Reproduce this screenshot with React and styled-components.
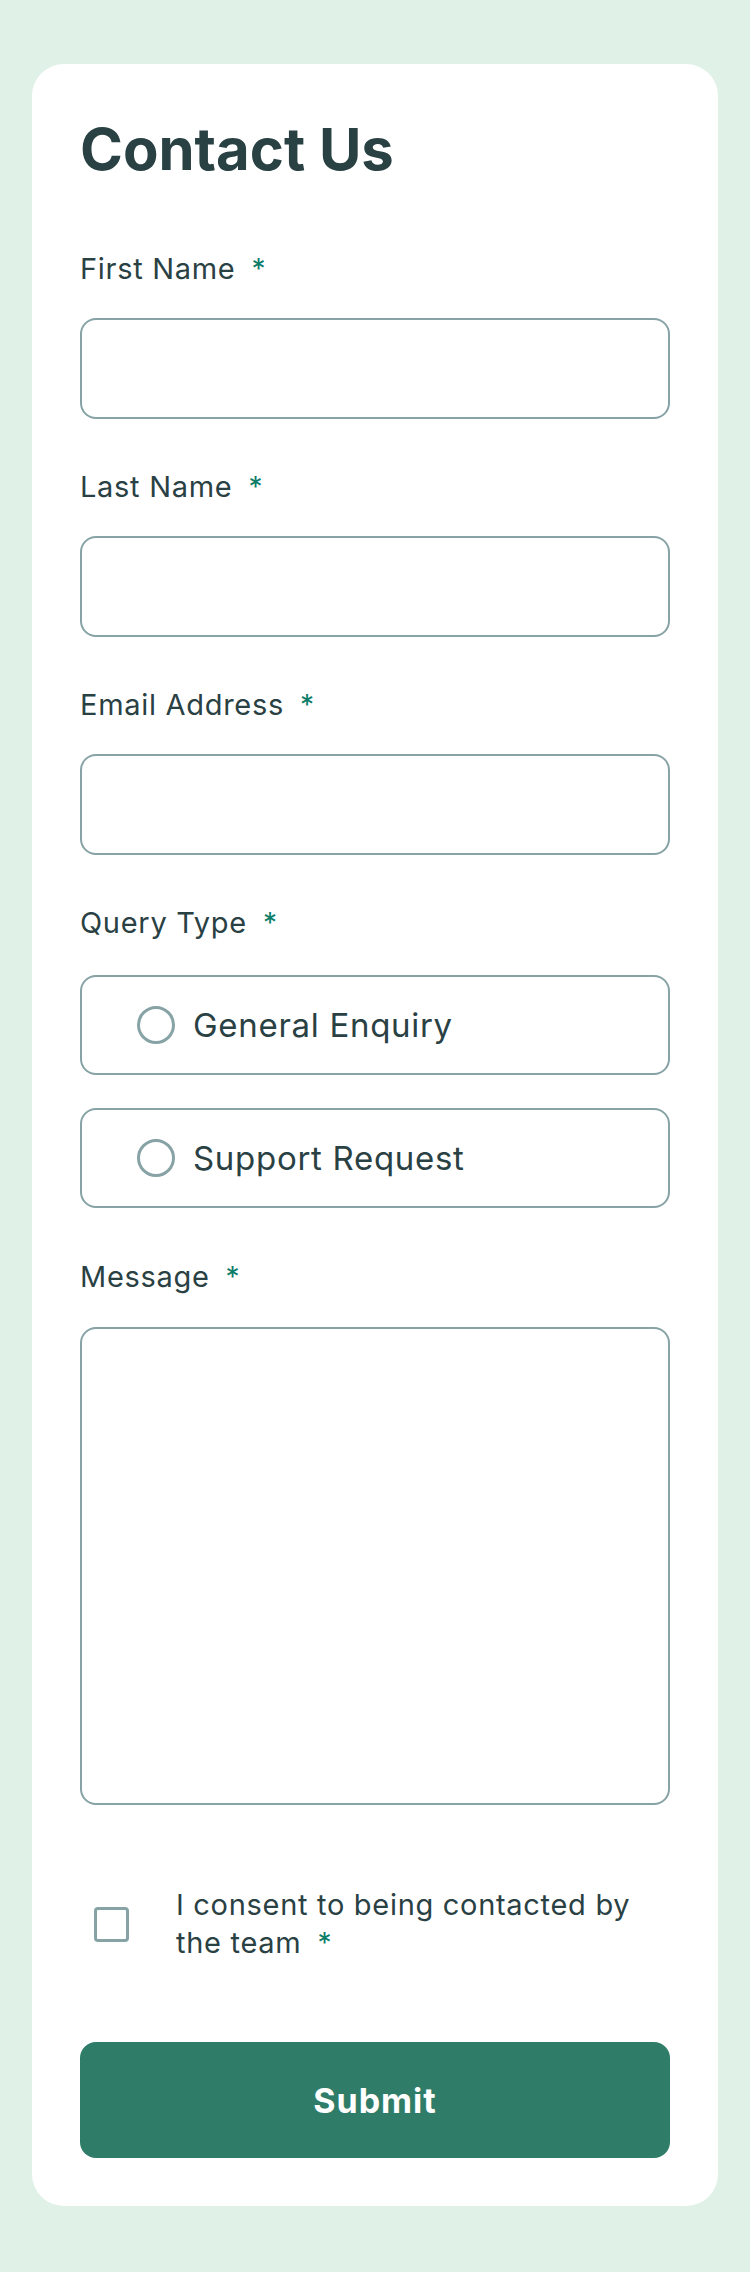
import React from "react";
import styled, { createGlobalStyle } from "styled-components";

const Global = createGlobalStyle`
  * { box-sizing: border-box; }
  html, body { margin: 0; padding: 0; }
  body {
    background: #e0f1e8;
    font-family: Inter, "Noto Sans", "Liberation Sans", sans-serif;
    color: #2a4144;
  }
`;

const Page = styled.main`
  padding: 64px 32px 64px;
`;

const Card = styled.form`
  background: #ffffff;
  border-radius: 32px;
  padding: 56px 48px 48px;
  display: flex;
  flex-direction: column;
`;

const Title = styled.h1`
  margin: 0 0 73px;
  font-size: 58px;
  line-height: 58px;
  font-weight: 700;
  color: #2a4144;
`;

const Field = styled.div`
  display: flex;
  flex-direction: column;
  margin-bottom: ${(p) => p.$mb || 50}px;
`;

const Label = styled.label`
  display: flex;
  align-items: baseline;
  gap: 16px;
  font-size: 29px;
  line-height: 36px;
  letter-spacing: 0.7px;
  color: #2a4144;
  margin-bottom: ${(p) => p.$mb || 31}px;
`;

const Star = styled.span`
  color: #0c7d69;
  font-size: 28px;
`;

const TextInput = styled.input`
  display: block;
  width: 100%;
  height: 101px;
  border: 2px solid #87a3a6;
  border-radius: 16px;
  background: #fff;
  font: inherit;
  padding: 0 32px;
  outline: none;
`;

const TextArea = styled.textarea`
  display: block;
  width: 100%;
  height: 478px;
  border: 2px solid #87a3a6;
  border-radius: 16px;
  background: #fff;
  resize: none;
  font: inherit;
  padding: 24px 32px;
  outline: none;
`;

const RadioGroup = styled.div`
  display: flex;
  flex-direction: column;
  gap: 33px;
`;

const RadioOption = styled.label`
  display: flex;
  align-items: center;
  gap: 18px;
  height: 100px;
  padding-left: 55px;
  border: 2px solid #87a3a6;
  border-radius: 16px;
  font-size: 33px;
  letter-spacing: 0.7px;
  color: #2a4144;
`;

const RadioCircle = styled.input`
  appearance: none;
  margin: 0;
  width: 38px;
  height: 38px;
  border: 3px solid #87a3a6;
  border-radius: 50%;
  background: #fff;
  flex: none;
`;

const ConsentRow = styled.label`
  display: flex;
  align-items: center;
  gap: 47px;
  padding-left: 14px;
  margin: 31px 0 80px;
`;

const CheckBox = styled.input`
  appearance: none;
  margin: 0;
  width: 35px;
  height: 35px;
  border: 3px solid #87a3a6;
  border-radius: 4px;
  background: #fff;
  flex: none;
`;

const ConsentText = styled.span`
  font-size: 29px;
  line-height: 38px;
  letter-spacing: 0.7px;
  color: #2a4144;
`;

const InlineStar = styled.span`
  color: #0c7d69;
  margin-left: 16px;
  font-size: 28px;
`;

const SubmitButton = styled.button`
  display: block;
  width: 100%;
  height: 116px;
  border: none;
  border-radius: 16px;
  background: #2f7d69;
  color: #ffffff;
  font-family: inherit;
  font-size: 34px;
  font-weight: 700;
  letter-spacing: 1px;
  cursor: pointer;
`;

function TextField({ label, type = "text", mb }) {
  return (
    <Field $mb={mb}>
      <Label>
        {label}
        <Star>*</Star>
      </Label>
      <TextInput type={type} />
    </Field>
  );
}

export default function App() {
  return (
    <>
      <Global />
      <Page>
        <Card onSubmit={(e) => e.preventDefault()}>
          <Title>Contact Us</Title>
          <TextField label="First Name" />
          <TextField label="Last Name" />
          <TextField label="Email Address" type="email" />
          <Field $mb={51}>
            <Label $mb={34}>
              Query Type
              <Star>*</Star>
            </Label>
            <RadioGroup>
              <RadioOption>
                <RadioCircle type="radio" name="query" />
                General Enquiry
              </RadioOption>
              <RadioOption>
                <RadioCircle type="radio" name="query" />
                Support Request
              </RadioOption>
            </RadioGroup>
          </Field>
          <Field $mb={50}>
            <Label $mb={32}>
              Message
              <Star>*</Star>
            </Label>
            <TextArea />
          </Field>
          <ConsentRow>
            <CheckBox type="checkbox" />
            <ConsentText>
              I consent to being contacted by the team
              <InlineStar>*</InlineStar>
            </ConsentText>
          </ConsentRow>
          <SubmitButton type="submit">Submit</SubmitButton>
        </Card>
      </Page>
    </>
  );
}
